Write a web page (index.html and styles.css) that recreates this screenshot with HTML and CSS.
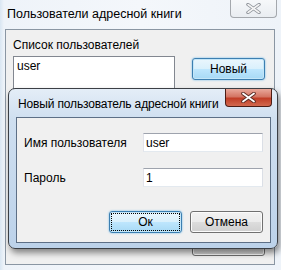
FILE: index.html
```html
<!DOCTYPE html>
<html lang="ru">

<head>
    <meta charset="UTF-8">
    <title>Пользователи адресной книги</title>
    <link rel="stylesheet" href="styles.css">
</head>

<body>
    <div class="window">
        <div class="titlebar">
            <span class="title">Пользователи адресной книги</span>
            <div class="close-btn">
                <svg width="17" height="11" viewBox="0 0 17 11">
                    <path d="M3 1.5 L14 9.5 M14 1.5 L3 9.5" stroke="#8a8f96" stroke-width="3.4" stroke-linecap="round" />
                    <path d="M3 1.5 L14 9.5 M14 1.5 L3 9.5" stroke="#f4f4f4" stroke-width="1.6" stroke-linecap="round" />
                </svg>
            </div>
        </div>
        <div class="client">
            <div class="label">Список пользователей</div>
            <div class="list-row">
                <div class="listbox">user</div>
                <div class="side-buttons">
                    <button class="btn default">Новый</button>
                </div>
            </div>
            <div class="bottom-row">
                <button class="btn" aria-label="Закрыть"></button>
            </div>
        </div>

        <!-- модальное окно поверх -->
        <div class="dialog">
            <div class="dlg-titlebar">
                <span class="dlg-title">Новый пользователь адресной книги</span>
                <div class="close-red">
                    <svg width="17" height="11" viewBox="0 0 17 11">
                        <path d="M3 1.5 L14 9.5 M14 1.5 L3 9.5" stroke="#5a2a22" stroke-width="3.6" stroke-linecap="round" />
                        <path d="M3 1.5 L14 9.5 M14 1.5 L3 9.5" stroke="#ffffff" stroke-width="1.8" stroke-linecap="round" />
                    </svg>
                </div>
            </div>
            <div class="dlg-client">
                <div class="field">
                    <label for="name">Имя пользователя</label>
                    <input type="text" id="name" value="user">
                </div>
                <div class="field">
                    <label for="pass">Пароль</label>
                    <input type="text" id="pass" value="1">
                </div>
                <div class="dlg-buttons">
                    <button class="btn default focused"><span>Ок</span></button>
                    <button class="btn">Отмена</button>
                </div>
            </div>
        </div>
    </div>
</body>

</html>
```

FILE: styles.css
```css
body {
    margin: 0;
    font-family: "Liberation Sans", Arial, sans-serif;
    font-size: 12px;
    color: #000;
}

.window {
    position: relative;
    width: 281px;
    height: 270px;
    overflow: hidden;
    background: linear-gradient(90deg, #d9e6f2 0px, #eef3f9 4px, #f4f7fb 50%, #eef3f9 100%);
}

.titlebar {
    display: flex;
    justify-content: space-between;
    height: 29px;
}

.title {
    padding: 7px 0 0 7px;
    font-size: 12.5px;
    color: #000;
}

.close-btn {
    width: 47px;
    height: 18px;
    margin-right: 4px;
    flex-shrink: 0;
    box-sizing: border-box;
    border: 1px solid #a4a8ad;
    border-top: none;
    border-radius: 0 0 4px 4px;
    background: linear-gradient(#f6f8fa, #e9edf1);
    display: flex;
    align-items: center;
    justify-content: center;
}

.client {
    margin-left: 5px;
    width: 270px;
    height: 236px;
    box-sizing: border-box;
    border: 1px solid #8a96a3;
    background: #f0f0f0;
    padding: 8px 0 0 7px;
    display: flex;
    flex-direction: column;
}

.label {
    height: 18px;
}

.list-row {
    display: flex;
    gap: 17px;
}

.listbox {
    width: 162px;
    height: 100px;
    box-sizing: border-box;
    border: 1px solid #828790;
    background: #fff;
    padding: 2px 3px;
}

.side-buttons {
    padding-top: 2px;
}

.btn {
    width: 73px;
    height: 22px;
    box-sizing: border-box;
    border: 1px solid #707070;
    border-radius: 3px;
    background: linear-gradient(#f2f2f2 0%, #ebebeb 50%, #dddddd 51%, #cfcfcf 100%);
    box-shadow: inset 0 0 0 1px #fbfbfb;
    font-family: inherit;
    font-size: 12px;
    color: #000;
    padding: 0;
}

.btn.default {
    border-color: #3c7fb1;
    background: linear-gradient(#eaf6fd 0%, #d9f0fc 50%, #bee6fd 51%, #a7d9f5 100%);
    box-shadow: inset 0 0 0 1px #c4e6f8, 0 0 2px #5ab0e8;
}

.bottom-row {
    display: flex;
    justify-content: flex-end;
    padding: 78px 9px 0 0;
}

/* модальный диалог */
.dialog {
    position: absolute;
    left: 8px;
    top: 88px;
    width: 270px;
    height: 161px;
    box-sizing: border-box;
    border: 1px solid #3b3f45;
    border-radius: 7px;
    background: linear-gradient(#e4edf7 0px, #cfdff0 30px, #bcd2ea 100%);
    box-shadow: 2px 4px 6px rgba(0, 0, 0, 0.45);
    padding: 0 6px 5px 7px;
    display: flex;
    flex-direction: column;
}

.dlg-titlebar {
    display: flex;
    justify-content: space-between;
    height: 28px;
}

.dlg-title {
    padding: 8px 0 0 2px;
    font-size: 12px;
    letter-spacing: -0.15px;
    white-space: nowrap;
}

.close-red {
    width: 47px;
    height: 18px;
    margin-right: -1px;
    flex-shrink: 0;
    box-sizing: border-box;
    border: 1px solid #4b1c15;
    border-top: none;
    border-radius: 0 0 4px 4px;
    background: linear-gradient(#e9a99b 0%, #d47563 45%, #c13e27 55%, #d2694f 100%);
    display: flex;
    align-items: center;
    justify-content: center;
}

.dlg-client {
    flex: 1;
    border: 1px solid #5d6f86;
    background: #f0f0f0;
    padding: 15px 7px 0 7px;
}

.field {
    display: flex;
    align-items: center;
    justify-content: space-between;
    height: 19px;
    margin-bottom: 16px;
}

.field input {
    width: 120px;
    height: 19px;
    box-sizing: border-box;
    border: 1px solid #abadb3;
    border-top-color: #9ea3ad;
    border-left-color: #e2e3ea;
    border-right-color: #dbdfe6;
    border-bottom-color: #e3e9ef;
    font-family: inherit;
    font-size: 12px;
    padding: 0 2px;
}

.dlg-buttons {
    display: flex;
    justify-content: flex-end;
    gap: 8px;
    margin-top: 24px;
}

.btn.focused span {
    display: inline-block;
    width: 67px;
    height: 16px;
    line-height: 16px;
    outline: 1px dotted #000;
}
```
